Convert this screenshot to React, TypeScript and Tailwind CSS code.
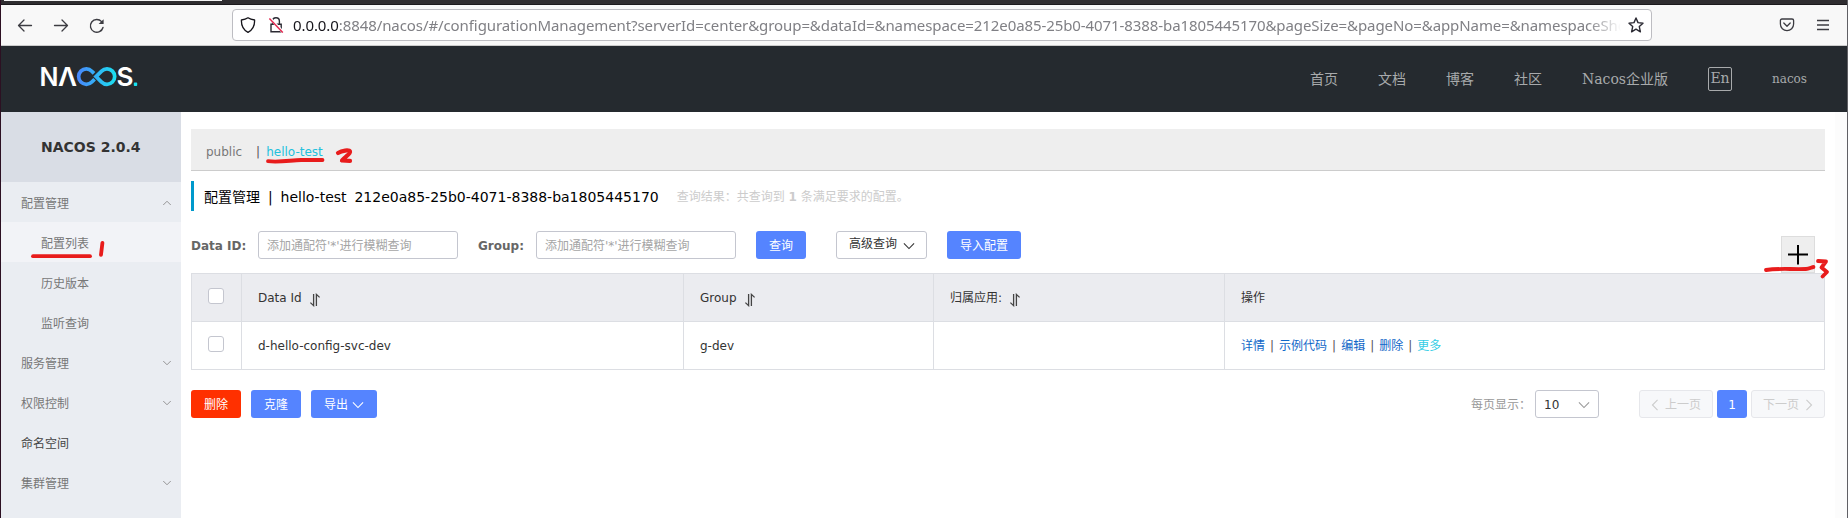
import type { ReactNode } from "react";

function Chevron({ className, d = "M1 2 L8 9 L15 2", box = "0 0 16 11" }: { className: string; d?: string; box?: string }) {
  return (
    <svg viewBox={box} className={className} fill="none" stroke="currentColor" strokeWidth="1.5">
      <path d={d} />
    </svg>
  );
}

function SortIcon() {
  return (
    <svg viewBox="0 0 12 14" className="relative top-[2px] ml-[7px] h-[14px] w-3" fill="none" stroke="#444" strokeWidth="1.3">
      <path d="M4.6 1 V12.6 L1.4 9.6" />
      <path d="M7.4 13 V1.4 L10.6 4.4" />
    </svg>
  );
}

function BrowserBar() {
  return (
    <div className="shrink-0">
      <div className="h-[5px] border-b border-[#1b191c] bg-[#2f2d30] pl-[3px]">
        <div className="h-px w-[218px] bg-[#f4f4f4]" />
      </div>
      <div className="flex h-[41px] items-center border-b border-[#cccccc] bg-[#f8f8f8] text-[#3c3c42]">
        <svg viewBox="0 0 16 16" className="ml-4 mt-[2px] h-4 w-4" fill="none" stroke="currentColor" strokeWidth="1.3" strokeLinecap="round" strokeLinejoin="round">
          <path d="M14.5 7.5 H1.5 M7 2 L1.5 7.5 L7 13" />
        </svg>
        <svg viewBox="0 0 16 16" className="ml-5 mt-[2px] h-4 w-4" fill="none" stroke="currentColor" strokeWidth="1.3" strokeLinecap="round" strokeLinejoin="round">
          <path d="M1.5 7.5 H14.5 M9 2 L14.5 7.5 L9 13" />
        </svg>
        <svg viewBox="0 0 16 16" className="ml-5 mt-[2px] h-4 w-4" fill="none" stroke="currentColor" strokeWidth="1.4" strokeLinecap="round">
          <path d="M14 9.5 A6.4 6.4 0 1 1 12.6 3.6" />
          <path d="M14.6 1.2 V6 H9.6 Z" fill="currentColor" stroke="none" />
        </svg>
        <div className="ml-[127px] flex h-8 w-[1420px] items-center rounded-[4px] border border-[#bdbdc2] bg-white pl-[7px]">
          <svg viewBox="0 0 16 16" className="h-4 w-4 shrink-0 text-[#15141a]" fill="none" stroke="currentColor" strokeWidth="1.3" strokeLinejoin="round">
            <path d="M8 0.8 C10 2.3 12.5 2.8 14.6 3 C14.8 8.8 12.6 13 8 15.3 C3.4 13 1.2 8.8 1.4 3 C3.5 2.8 6 2.3 8 0.8 Z" />
          </svg>
          <svg viewBox="0 0 16 16" className="ml-3 h-4 w-4 shrink-0" fill="none" strokeWidth="1.4">
            <path d="M4.6 7.2 V4.2 A3.4 3.4 0 0 1 11.4 4.2 V7.2 M3 7.2 H13.2 V14.8 H3 Z" stroke="#2b2a33" />
            <path d="M2 1.2 L15.2 15.4" stroke="#fff" strokeWidth="2.8" />
            <path d="M1.4 1.6 L14.8 15.6" stroke="#e22850" />
          </svg>
          <div className="ml-[9px] w-[1328px] overflow-hidden whitespace-nowrap font-['Noto_Sans',sans-serif] text-[15px] leading-7 tracking-[-0.086px] text-[#808085] [mask-image:linear-gradient(to_right,black_1295px,transparent_1328px)]">
            <span className="text-[#15141a]">0.0.0.0</span>
            <span>:8848/nacos/#/configurationManagement?serverId=center&amp;group=&amp;dataId=&amp;namespace=212e0a85-25b0-4071-8388-ba1805445170&amp;pageSize=&amp;pageNo=&amp;appName=&amp;namespaceSho</span>
          </div>
          <svg viewBox="0 0 16 16" className="ml-[7px] h-4 w-4 shrink-0" fill="none" stroke="#2b2a33" strokeWidth="1.4" strokeLinejoin="round">
            <path d="M8 1 L10 5.6 L15 6.2 L11.3 9.6 L12.4 14.8 L8 12.2 L3.6 14.8 L4.7 9.6 L1 6.2 L6 5.6 Z" />
          </svg>
        </div>
        <svg viewBox="0 0 16 16" className="ml-[127px] h-4 w-4" fill="none" stroke="currentColor" strokeWidth="1.3" strokeLinecap="round" strokeLinejoin="round">
          <path d="M3 2 H13 Q14.6 2 14.6 3.6 V7 A6.6 6.6 0 0 1 1.4 7 V3.6 Q1.4 2 3 2 Z M4.8 6 L8 9.2 L11.2 6" />
        </svg>
        <svg viewBox="0 0 16 16" className="ml-5 h-4 w-4" fill="none" stroke="currentColor" strokeWidth="1.3">
          <path d="M2 3.5 H14 M2 8 H14 M2 12.5 H14" />
        </svg>
      </div>
    </div>
  );
}

function Logo() {
  return (
    <svg viewBox="0 0 97 20" className="ml-10 mt-[2px] h-5 w-[97px] overflow-visible" fontFamily="Inter, sans-serif" fontWeight="600" fontSize="26">
      <defs>
        <linearGradient id="loop" gradientUnits="userSpaceOnUse" x1="36" y1="0" x2="76" y2="0">
          <stop offset="0" stopColor="#4a86fb" />
          <stop offset="1" stopColor="#19e2f0" />
        </linearGradient>
      </defs>
      <text x="-1.5" y="19" fill="#fff" textLength="19" lengthAdjust="spacingAndGlyphs">N</text>
      <text x="17" y="19" fill="#fff" textLength="19" lengthAdjust="spacingAndGlyphs">Λ</text>
      <g fill="none" stroke="url(#loop)" strokeWidth="3.7">
        <path d="M53 6.4 L50.8 4.2 A7.7 7.7 0 1 0 50.8 15 L53.6 12.2" />
        <path d="M55 9.6 L60.6 4.1 A7.7 7.7 0 1 1 60.6 15.1 Z" />
      </g>
      <text x="75.5" y="19" fill="#fff" textLength="17" lengthAdjust="spacingAndGlyphs">S</text>
      <rect x="92.8" y="15.6" width="3.4" height="3.4" rx="0.8" fill="#19e2f0" />
    </svg>
  );
}

function Header() {
  return (
    <header className="flex h-[66px] shrink-0 items-center bg-[#252a2f] pb-[6px] pr-10">
      <Logo />
      <nav className="ml-auto flex items-center gap-10 pt-[6px] font-['DejaVu_Serif','Noto_Sans_CJK_SC',serif] text-sm text-[#a8aaac]">
        <span>首页</span>
        <span>文档</span>
        <span>博客</span>
        <span>社区</span>
        <span>Nacos企业版</span>
        <span className="flex h-6 w-6 items-center justify-center rounded-[2px] border border-[#a8aaac] pb-[2px]">En</span>
        <span className="text-xs">nacos</span>
      </nav>
    </header>
  );
}

const MENU: { label: string; kind?: "open" | "closed" | "child" | "active" | "plain" }[] = [
  { label: "配置管理", kind: "open" },
  { label: "配置列表", kind: "active" },
  { label: "历史版本", kind: "child" },
  { label: "监听查询", kind: "child" },
  { label: "服务管理", kind: "closed" },
  { label: "权限控制", kind: "closed" },
  { label: "命名空间", kind: "plain" },
  { label: "集群管理", kind: "closed" },
];

const MENU_CLASS = {
  open: "pl-5 text-[#777]",
  closed: "pl-5 text-[#777]",
  plain: "pl-5 text-[#444]",
  child: "pl-10 text-[#777]",
  active: "pl-10 text-[#777] bg-[#f2f3f7]",
};

function Sidebar() {
  return (
    <aside className="w-[180px] shrink-0 bg-[#eaedf2]">
      <div className="flex h-[70px] items-center bg-[#d9dde5] pl-10 text-sm font-bold text-[#333]">NACOS 2.0.4</div>
      {MENU.map(({ label, kind = "plain" }) => (
        <div key={label} className={`flex h-10 items-center justify-between pr-[10px] ${MENU_CLASS[kind]}`}>
          <span className="pt-[3px]">{label}</span>
          {kind === "open" && <Chevron className="mt-[2px] h-[6px] w-2 text-[#777]" d="M0.5 10 L8 2.5 L15.5 10" box="0 0 16 12" />}
          {kind === "closed" && <Chevron className="mt-[2px] h-[6px] w-2 text-[#777]" d="M0.5 2 L8 9.5 L15.5 2" box="0 0 16 12" />}
        </div>
      ))}
    </aside>
  );
}

function Button({ className, children }: { className: string; children: ReactNode }) {
  return <button className={`flex h-7 items-center justify-center rounded-[3px] pt-px text-white ${className}`}>{children}</button>;
}

function Field() {
  return (
    <div className="flex h-7 w-[200px] items-center rounded-[3px] border border-[#c4c6cf] pl-2 pt-px text-[#a5a5a5]">
      添加通配符'*'进行模糊查询
    </div>
  );
}

function Checkbox() {
  return <span className="mb-[3px] block h-4 w-4 rounded-[3px] border border-[#c4c6cf] bg-white" />;
}

const COLS = "grid grid-cols-[50px_442px_250px_291px_1fr]";
const CELL = "flex items-center border-r border-[#dcdee3]";

function Table() {
  return (
    <div className="mt-[14px] border-l border-t border-[#dcdee3] text-[#333]">
      <div className={`${COLS} h-12 border-b border-[#dcdee3] bg-[#ebecf0]`}>
        <div className={`${CELL} pl-4`}><Checkbox /></div>
        <div className={`${CELL} pl-4`}>Data Id <SortIcon /></div>
        <div className={`${CELL} pl-4`}>Group <SortIcon /></div>
        <div className={`${CELL} pl-4`}>归属应用: <SortIcon /></div>
        <div className={`${CELL} pl-4`}>操作</div>
      </div>
      <div className={`${COLS} h-12 border-b border-[#dcdee3]`}>
        <div className={`${CELL} pl-4`}><Checkbox /></div>
        <div className={`${CELL} pl-4`}>d-hello-config-svc-dev</div>
        <div className={`${CELL} pl-4`}>g-dev</div>
        <div className={CELL} />
        <div className={`${CELL} gap-[5px] pl-4 text-[#1067c8]`}>
          <span>详情</span><span className="text-[#555]">|</span>
          <span>示例代码</span><span className="text-[#555]">|</span>
          <span>编辑</span><span className="text-[#555]">|</span>
          <span>删除</span><span className="text-[#555]">|</span>
          <span className="text-[#33cde5]">更多</span>
        </div>
      </div>
    </div>
  );
}

function Content() {
  return (
    <main className="flex w-[1634px] flex-col pt-[17px]">
      <div className="flex h-[42px] items-center border-b border-[#ccc] bg-[#eee] pl-[15px] pt-[5px] text-[#777]">
        <span>public</span>
        <span className="ml-[14px] text-[#555]">|</span>
        <span className="ml-[6px] text-[#22c1dd]">hello-test</span>
      </div>
      <div className="mt-[10px] flex h-[30px] items-center border-l-[3px] border-[#09c] pl-[10px] pt-px text-sm text-black">
        <span className="whitespace-pre [word-spacing:-0.5px]">配置管理  |  hello-test  212e0a85-25b0-4071-8388-ba1805445170</span>
        <span className="ml-[18px] text-xs text-[#ccc]">
          查询结果：共查询到 <b>1</b> 条满足要求的配置。
        </span>
      </div>
      <div className="mt-5 flex h-7 items-center text-[#333]">
        <b className="w-[67px] pt-px text-[#666]">Data ID:</b>
        <Field />
        <b className="ml-5 w-[58px] pt-px text-[#666]">Group:</b>
        <Field />
        <Button className="ml-5 w-[50px] bg-[#5584ff]">查询</Button>
        <div className="ml-[30px] flex h-7 w-[91px] items-center rounded-[3px] border border-[#c4c6cf] pl-3">
          <span className="pb-[2px]">高级查询</span>
          <Chevron className="ml-[6px] mt-px h-2 w-3" />
        </div>
        <Button className="ml-5 w-[74px] bg-[#5584ff]">导入配置</Button>
        <div className="relative top-[9px] ml-auto mr-[10px] h-[37px] w-[34px] border border-[#ddd] bg-[#eee]">
          <svg viewBox="0 0 32 35" className="h-full w-full" stroke="#000" strokeWidth="2">
            <path d="M6 17.5 H26 M16 8 V27.5" />
          </svg>
        </div>
      </div>
      <Table />
      <div className="mt-5 flex h-7 items-center">
        <Button className="w-[50px] bg-[#ff3000]">删除</Button>
        <Button className="ml-[10px] w-[50px] bg-[#5584ff]">克隆</Button>
        <Button className="ml-[10px] w-[66px] bg-[#5584ff]">
          导出
          <Chevron className="ml-1 h-2 w-3" />
        </Button>
        <span className="ml-auto w-[64px] whitespace-nowrap pt-px text-[#999]">每页显示：</span>
        <div className="flex h-7 w-16 items-center justify-between rounded-[3px] border border-[#c4c6cf] pl-2 pr-2 pt-px text-[#333]">
          <span>10</span>
          <Chevron className="h-2 w-3 text-[#999]" />
        </div>
        <div className="ml-10 flex h-7 w-[74px] items-center justify-center gap-[6px] rounded-[3px] border border-[#e6e7eb] bg-[#f7f8fa] pt-px text-[#ccc]">
          <Chevron className="h-3 w-2" d="M9 1 L2 8 L9 15" box="0 0 11 16" />
          上一页
        </div>
        <Button className="ml-1 w-[30px] bg-[#5584ff]">1</Button>
        <div className="ml-1 flex h-7 w-[74px] items-center justify-center gap-[6px] rounded-[3px] border border-[#e6e7eb] bg-[#f7f8fa] pt-px text-[#ccc]">
          下一页
          <Chevron className="h-3 w-2" d="M2 1 L9 8 L2 15" box="0 0 11 16" />
        </div>
      </div>
    </main>
  );
}

function Markers() {
  return (
    <svg viewBox="0 0 1848 518" className="pointer-events-none absolute -left-px top-0 h-[518px] w-[1848px]" fill="none" stroke="#e81c1c" strokeWidth="3.8" strokeLinecap="round" strokeLinejoin="round">
      <path d="M33 256.2 H90" />
      <path d="M102.4 243 L101 254.8" />
      <path d="M268 161.2 C280 162.5 291 160.2 301 160 H322.5" />
      <path d="M338 153 C342 150.5 349 149.5 350 151.5 C351 154 343 158 342 160.5 L350 160.8" strokeWidth="4.2" />
      <path d="M1766 270 C1780 268 1790 269.5 1806 269 C1809 269 1812 267 1813.5 267" />
      <path d="M1818 261 L1826 261.5 L1821.5 267.5 L1827 272 L1822.5 276.5" />
    </svg>
  );
}

export default function App() {
  return (
    <div className="relative flex h-[518px] w-[1848px] flex-col overflow-hidden border-l border-[#2c1022] border-r border-r-[#606065] bg-white font-['DejaVu_Sans','Noto_Sans_CJK_SC',sans-serif] text-xs">
      <BrowserBar />
      <Header />
      <div className="flex flex-1">
        <Sidebar />
        <div className="flex flex-1 pl-[10px]">
          <Content />
          <div className="ml-auto w-3 bg-[#fcfcfc]" />
        </div>
      </div>
      <Markers />
    </div>
  );
}
